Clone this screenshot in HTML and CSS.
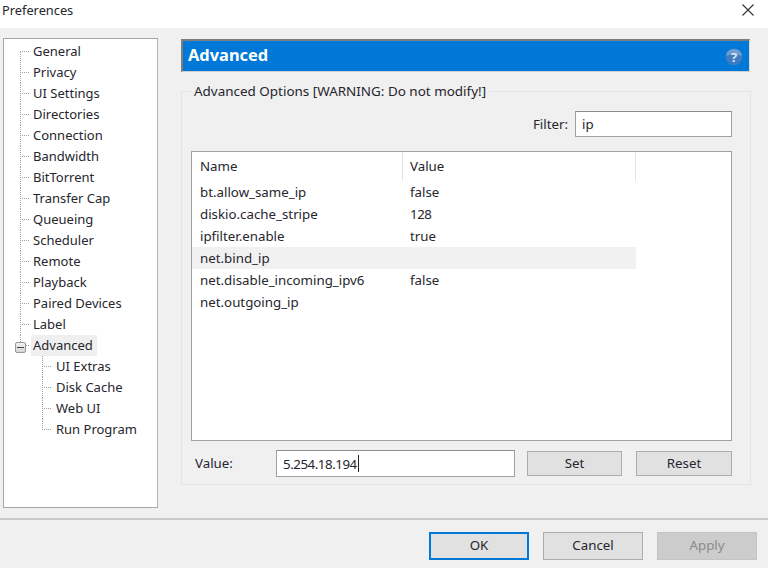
FILE: index.html
```html
<!DOCTYPE html>
<html lang="en">
<head>
<meta charset="utf-8">
<title>Preferences</title>
<link rel="stylesheet" href="styles.css">
</head>
<body>
<div class="dialog">
  <header class="titlebar">
    <span class="title">Preferences</span>
    <svg class="close" width="12" height="12" viewBox="0 0 12 12"><path d="M0.5 0.5L11.5 11.5M11.5 0.5L0.5 11.5" stroke="#333" stroke-width="1.1" fill="none"/></svg>
  </header>
  <main class="body">
    <nav class="tree">
      <div class="node"><span class="conn first"></span><span class="label">General</span></div>
      <div class="node"><span class="conn"></span><span class="label">Privacy</span></div>
      <div class="node"><span class="conn"></span><span class="label">UI Settings</span></div>
      <div class="node"><span class="conn"></span><span class="label">Directories</span></div>
      <div class="node"><span class="conn"></span><span class="label">Connection</span></div>
      <div class="node"><span class="conn"></span><span class="label">Bandwidth</span></div>
      <div class="node"><span class="conn"></span><span class="label">BitTorrent</span></div>
      <div class="node"><span class="conn"></span><span class="label">Transfer Cap</span></div>
      <div class="node"><span class="conn"></span><span class="label">Queueing</span></div>
      <div class="node"><span class="conn"></span><span class="label">Scheduler</span></div>
      <div class="node"><span class="conn"></span><span class="label">Remote</span></div>
      <div class="node"><span class="conn"></span><span class="label">Playback</span></div>
      <div class="node"><span class="conn"></span><span class="label">Paired Devices</span></div>
      <div class="node"><span class="conn"></span><span class="label">Label</span></div>
      <div class="node"><span class="conn last"><span class="expander"></span></span><span class="label selected">Advanced</span></div>
      <div class="node child"><span class="conn"></span><span class="label">UI Extras</span></div>
      <div class="node child"><span class="conn"></span><span class="label">Disk Cache</span></div>
      <div class="node child"><span class="conn"></span><span class="label">Web UI</span></div>
      <div class="node child"><span class="conn last"></span><span class="label">Run Program</span></div>
    </nav>
    <section class="pane">
      <div class="banner">
        <h1 class="banner-title">Advanced</h1>
        <svg class="help" width="18" height="18" viewBox="0 0 18 18"><circle cx="9" cy="9" r="8.5" fill="#3f7cc2"/><path d="M1 8a8 7 0 0 1 16 0c-4-2-11-2-16 0z" fill="#6f9ed2"/><text x="9" y="13.5" text-anchor="middle" class="help-mark">?</text></svg>
      </div>
      <fieldset class="group">
        <legend class="legend">Advanced Options [WARNING: Do not modify!]</legend>
        <div class="filter-row">
          <label class="field-label">Filter:</label>
          <div class="input filter-input">ip</div>
        </div>
        <div class="list">
          <div class="list-head">
            <div class="col-name head-cell">Name</div>
            <div class="col-value head-cell">Value</div>
          </div>
          <div class="row"><div class="col-name">bt.allow_same_ip</div><div class="col-value">false</div></div>
          <div class="row"><div class="col-name">diskio.cache_stripe</div><div class="col-value num">128</div></div>
          <div class="row"><div class="col-name">ipfilter.enable</div><div class="col-value">true</div></div>
          <div class="row hot"><div class="col-name">net.bind_ip</div><div class="col-value"></div></div>
          <div class="row"><div class="col-name">net.disable_incoming_ipv6</div><div class="col-value">false</div></div>
          <div class="row"><div class="col-name">net.outgoing_ip</div><div class="col-value"></div></div>
        </div>
        <div class="value-row">
          <label class="field-label value-label">Value:</label>
          <div class="input value-input num">5.254.18.194<span class="caret"></span></div>
          <button class="btn small set">Set</button>
          <button class="btn small">Reset</button>
        </div>
      </fieldset>
    </section>
  </main>
  <footer class="footer">
    <button class="btn big default">OK</button>
    <button class="btn big">Cancel</button>
    <button class="btn big disabled">Apply</button>
  </footer>
</div>
</body>
</html>
```

FILE: styles.css
```css
* { box-sizing: border-box; }
html, body { margin: 0; padding: 0; }
body {
  width: 768px;
  height: 568px;
  overflow: hidden;
  font-family: "Noto Sans", "Open Sans", sans-serif;
  font-size: 13.3px;
  color: #26262e;
  background: #f0f0f0;
}
.dialog { display: flex; flex-direction: column; height: 568px; }
.titlebar {
  height: 28px;
  background: #fff;
  display: flex;
  align-items: center;
  justify-content: space-between;
  padding: 0 14px 8px 2px;
  flex: none;
}
.title { font-size: 12.8px; }
.body {
  flex: none;
  height: 490px;
  display: flex;
  padding: 10px 17px 0 3px;
  gap: 23px;
}
.tree {
  width: 155px;
  height: 470px;
  background: #fff;
  border: 1px solid #a6a6a6;
  border-right-color: #b4b4b4;
  padding: 2px 0 0 16px;
  flex: none;
  font-size: 13px;
}
.node { display: flex; height: 21px; align-items: center; }
.node.child { padding-left: 22px; }
.node.child .label { margin-left: 2px; }
.conn {
  flex: none;
  position: relative;
  width: 10px;
  height: 21px;
  background-image:
    repeating-linear-gradient(180deg, #a0a0a0 0 1px, transparent 1px 2px),
    repeating-linear-gradient(90deg, #a0a0a0 0 1px, transparent 1px 2px);
  background-size: 1px 100%, 10px 1px;
  background-position: 0 0, 0 10px;
  background-repeat: no-repeat;
}
.conn.first { background-size: 1px 50%, 10px 1px; background-position: 0 100%, 0 10px; }
.conn.last { background-size: 1px 50%, 10px 1px; background-position: 0 0, 0 10px; }
.expander {
  position: absolute;
  left: -5px;
  top: 7px;
  width: 11px;
  height: 11px;
  background: linear-gradient(#f0f0f0, #d4d4d4);
  border: 1px solid #9a9a9a;
  border-radius: 2px;
}
.expander::after {
  content: "";
  position: absolute;
  left: 1px;
  right: 1px;
  top: 4px;
  height: 1px;
  background: #444;
}
.label { padding: 0 2px; line-height: 21px; margin-left: 1px; white-space: nowrap; }
.label.selected { background: #efefef; width: 66px; }
.pane { flex: 1; display: flex; flex-direction: column; min-width: 0; }
.banner {
  height: 33px;
  margin-top: 1px;
  background: #0078d7;
  border-top: 2px solid #7d7d7d;
  border-left: 2px solid #7d7d7d;
  border-right: 1px solid #dcdcdc;
  border-bottom: 1px solid #d0d0d0;
  display: flex;
  align-items: center;
  justify-content: space-between;
  padding: 0 6px 0 5px;
  width: 569px;
}
.banner-title { margin: 0; padding-bottom: 4px; color: #fff; font-size: 16.4px; font-weight: 700; }
.help { flex: none; margin-top: 2px; }
.help-mark { font-size: 13px; font-weight: 700; fill: #dce8f5; font-family: "Noto Sans", sans-serif; }
.group {
  margin: 10px 0 0;
  padding: 10px 18px 0 9px;
  height: 403px;
  width: 570px;
  border: 1px solid #e3e3e3;
  min-width: 0;
}
.legend { padding: 0 3px; margin-left: 0; line-height: 18px; font-size: 13.45px; }
.filter-row { display: flex; justify-content: flex-end; align-items: center; gap: 7px; height: 27px; }
.input {
  background: #fff;
  border: 1px solid #a0a0a0;
  border-top-color: #8c8c8c;
  display: flex;
  align-items: center;
  padding-left: 6px;
}
.filter-input { width: 157px; height: 26px; }
.list {
  margin-top: 14px;
  height: 290px;
  background: #fff;
  border: 1px solid #a0a0a0;
  padding: 0;
  width: 541px;
}
.list-head { display: flex; height: 29px; width: 444px; }
.head-cell { line-height: 29px; border-right: 1px solid #e5e5e5; }
.row { display: flex; height: 22px; line-height: 22px; width: 444px; }
.row.hot { background: #f1f1f1; }
.col-name { width: 211px; padding-left: 8px; white-space: nowrap; flex: none; }
.col-value { width: 233px; padding-left: 7px; flex: none; }
.num { letter-spacing: -0.45px; }
.value-row { display: flex; align-items: center; margin-top: 9px; height: 27px; }
.value-label { width: 85px; padding-left: 4px; padding-bottom: 1px; }
.value-input { width: 239px; height: 27px; }
.caret { width: 1px; height: 17px; background: #222; margin-left: 1px; }
.btn {
  font: inherit;
  color: inherit;
  background: #e1e1e1;
  border: 1px solid #adadad;
  padding: 0 0 2px;
}
.small { width: 96px; height: 25px; margin-left: 14px; }
.small.set { margin-left: 12px; width: 95px; }
.footer {
  flex: 1;
  border-top: 2px solid #c8c8c8;
  display: flex;
  justify-content: flex-end;
  gap: 14px;
  padding: 12px 11px 0 0;
}
.big { width: 100px; height: 28px; }
.big.default { border: 2px solid #0078d7; }
.big.disabled { background: #cccccc; border-color: #c4c4c4; color: #8a8a8a; }
```
